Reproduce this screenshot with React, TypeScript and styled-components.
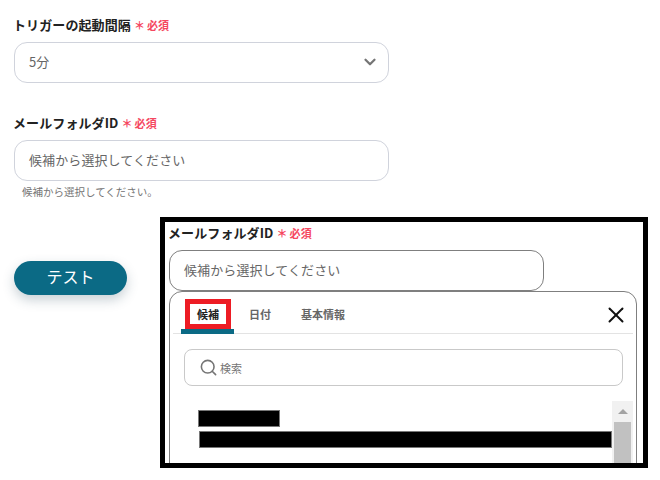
import styled, { createGlobalStyle } from 'styled-components';
import { ChevronDown, Search, X } from 'lucide-react';

const GlobalStyle = createGlobalStyle`
  html, body {
    margin: 0;
    padding: 0;
    background: #fff;
    font-family: "Noto Sans CJK JP", "Liberation Sans", sans-serif;
  }
  * {
    box-sizing: border-box;
  }
`;

function RequiredLabel({ children }: { children: string }) {
  return (
    <StyledLabel>
      {children}
      <StyledAsterisk>＊</StyledAsterisk>
      <StyledRequired>必須</StyledRequired>
    </StyledLabel>
  );
}

function App() {
  return (
    <StyledPage>
      <GlobalStyle />
      <StyledField>
        <RequiredLabel>トリガーの起動間隔</RequiredLabel>
        <StyledInputBox>
          <StyledValue>5分</StyledValue>
          <ChevronDown size={18} strokeWidth={3} color="#757575" />
        </StyledInputBox>
      </StyledField>

      <StyledField>
        <RequiredLabel>メールフォルダID</RequiredLabel>
        <StyledInputBox>
          <StyledValue>候補から選択してください</StyledValue>
        </StyledInputBox>
        <StyledHelp>候補から選択してください。</StyledHelp>
      </StyledField>

      <StyledTestButton>テスト</StyledTestButton>

      <StyledFrame>
        <RequiredLabel>メールフォルダID</RequiredLabel>
        <StyledFrameInput>
          <StyledValue>候補から選択してください</StyledValue>
        </StyledFrameInput>
        <StyledPanel>
          <StyledTabs>
            <StyledActiveTab>
              <StyledTabMarker>候補</StyledTabMarker>
            </StyledActiveTab>
            <StyledTab>日付</StyledTab>
            <StyledTab>基本情報</StyledTab>
            <StyledClose>
              <X size={26} strokeWidth={1.8} color="#111" />
            </StyledClose>
          </StyledTabs>
          <StyledSearch>
            <Search size={19} strokeWidth={2} color="#757575" />
            <span>検索</span>
          </StyledSearch>
          <StyledResults>
            <StyledList>
              <StyledRedaction $width={82} />
              <StyledRedaction $width={413} $offset={1} />
            </StyledList>
            <StyledScrollbar>
              <StyledScrollArrow />
              <StyledScrollThumb />
            </StyledScrollbar>
          </StyledResults>
        </StyledPanel>
      </StyledFrame>
    </StyledPage>
  );
}

export default App;

const StyledPage = styled.div`
  position: relative;
  width: 660px;
  height: 480px;
  padding: 15px 0 0 14px;
  overflow: hidden;
`;

const StyledField = styled.div`
  width: 375px;
  margin-bottom: 30px;
`;

const StyledLabel = styled.div`
  display: flex;
  align-items: center;
  height: 20px;
  margin: 0 0 7px -1px;
  color: #222;
  font-size: 13px;
  font-weight: 700;
  letter-spacing: 0.1px;
  line-height: 20px;
  white-space: nowrap;
`;

const StyledAsterisk = styled.span`
  margin-left: 3px;
  color: #f5475f;
  font-size: 11px;
  font-weight: 700;
`;

const StyledRequired = styled.span`
  margin-left: 2px;
  color: #f5475f;
  font-size: 11px;
  font-weight: 700;
`;

const StyledInputBox = styled.div`
  display: flex;
  align-items: center;
  justify-content: space-between;
  width: 375px;
  height: 41px;
  padding: 0 9px 2px 14px;
  background: #fff;
  border: 1px solid #d0d3dc;
  border-radius: 13px;
`;

const StyledValue = styled.span`
  color: #666;
  font-size: 13px;
  letter-spacing: 0.1px;
`;

const StyledHelp = styled.div`
  margin: 3px 0 0 8px;
  color: #757575;
  font-size: 10.5px;
  line-height: 16px;
`;

const StyledTestButton = styled.button`
  display: block;
  width: 113px;
  height: 34px;
  margin-top: 61px;
  padding: 0 0 4px;
  color: #fff;
  background: #0b6a85;
  border: none;
  border-radius: 17px;
  box-shadow: 0 5px 12px rgba(40, 70, 90, 0.25);
  font-family: inherit;
  font-size: 16px;
`;

const StyledFrame = styled.div`
  position: absolute;
  top: 217px;
  left: 160px;
  width: 488px;
  height: 251px;
  padding: 1px 0 0 4px;
  overflow: hidden;
  background: #fff;
  border: 5px solid #000;
`;

const StyledFrameInput = styled(StyledInputBox)`
  border-color: #7f7f7f;
`;

const StyledPanel = styled.div`
  width: 468px;
  height: 200px;
  padding: 0 3px;
  background: #fff;
  border: 1px solid #7f7f7f;
  border-radius: 13px;
`;

const StyledTabs = styled.div`
  display: flex;
  align-items: flex-end;
  height: 42px;
  padding-left: 8px;
  border-bottom: 1px solid #e3e3e3;
`;

const StyledTab = styled.div`
  display: flex;
  align-items: center;
  height: 34px;
  padding: 0 15px 4px;
  color: #666;
  font-size: 11px;
  font-weight: 700;
`;

const StyledActiveTab = styled.div`
  display: flex;
  flex-direction: column;
  align-items: flex-end;
  width: 53px;
  height: 35px;
  margin-bottom: -1px;
  border-bottom: 5px solid #0b6a85;
`;

const StyledTabMarker = styled.div`
  display: flex;
  align-items: center;
  justify-content: center;
  width: 46px;
  height: 30px;
  margin-right: 3px;
  padding-bottom: 1px;
  color: #222;
  border: 5px solid #ed1c24;
  font-size: 11px;
  font-weight: 700;
`;

const StyledClose = styled.div`
  display: flex;
  margin: 0 0 5px auto;
  padding-right: 4px;
`;

const StyledSearch = styled.div`
  display: flex;
  align-items: center;
  gap: 2px;
  width: 439px;
  height: 37px;
  margin: 15px 0 0 11px;
  padding-left: 14px;
  color: #757575;
  border: 1px solid #c9c9c9;
  border-radius: 8px;
  font-size: 11px;
`;

const StyledResults = styled.div`
  display: flex;
  justify-content: space-between;
  margin-top: 15px;
`;

const StyledList = styled.div`
  display: flex;
  flex-direction: column;
  gap: 4px;
  padding: 9px 0 0 25px;
`;

const StyledRedaction = styled.div<{ $width: number; $offset?: number }>`
  width: ${props => props.$width}px;
  height: 17px;
  margin-left: ${props => props.$offset || 0}px;
  background: #000;
  border: 1px solid #777;
`;

const StyledScrollbar = styled.div`
  display: flex;
  flex-direction: column;
  align-items: center;
  width: 21px;
  height: 80px;
  background: #f1f1f1;
`;

const StyledScrollArrow = styled.div`
  width: 0;
  height: 0;
  margin: 8px 0 8px;
  border-right: 5px solid transparent;
  border-bottom: 5px solid #a3a3a3;
  border-left: 5px solid transparent;
`;

const StyledScrollThumb = styled.div`
  flex: 1;
  width: 17px;
  background: #c1c1c1;
`;
